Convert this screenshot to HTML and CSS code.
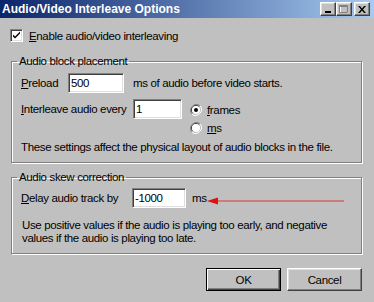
FILE: index.html
```html
<!DOCTYPE html>
<html lang="en">
<head>
    <meta charset="UTF-8">
    <meta name="viewport" content="width=device-width, initial-scale=1.0">
    <title>Audio/Video Interleave Options</title>
    <link rel="stylesheet" href="styles.css">
</head>
<body>
    <div class="titlebar">
        <span class="title">Audio/Video Interleave Options</span>
        <div class="caption-btns">
            <span class="cap-btn">
                <svg width="8" height="8" viewBox="0 0 8 8"><rect x="1" y="6" width="6" height="2" fill="#000"/></svg>
            </span>
            <span class="cap-btn">
                <svg width="10" height="9" viewBox="0 0 10 9"><path d="M1.5 1.5h7v6h-7z" fill="none" stroke="#fff"/><path d="M0.5 0.5h8v7h-8z M0.5 1.5h8" fill="none" stroke="#808080"/></svg>
            </span>
            <span class="cap-btn cap-close">
                <svg width="8" height="7" viewBox="0 0 8 7"><path d="M0 0h2l2 2.5L6 0h2L5 3.5 8 7H6L4 4.5 2 7H0l3-3.5z" fill="#000"/></svg>
            </span>
        </div>
    </div>

    <label class="enable">
        <span class="checkbox">
            <svg width="9" height="9" viewBox="0 0 9 9"><path d="M1 3.5l2 2 5-5v2l-5 5-2-2z" fill="#000"/></svg>
        </span>
        <span><u>E</u>nable audio/video interleaving</span>
    </label>

    <fieldset class="group group-placement">
        <legend>Audio block placement</legend>
        <div class="row">
            <span class="lbl lbl-preload"><u>P</u>reload</span>
            <input type="text" class="field field-preload" value="500">
            <span class="after-preload">ms of audio before video starts.</span>
        </div>
        <div class="row row-every">
            <span class="lbl lbl-every"><u>I</u>nterleave audio every</span>
            <input type="text" class="field field-every" value="1">
            <div class="radios">
                <div class="radio-item">
                    <svg width="12" height="12" viewBox="0 0 12 12">
                        <path d="M10.2 1.8A6 6 0 0 0 1.8 10.2" fill="none" stroke="#808080"/>
                        <path d="M9.2 2.8A4.5 4.5 0 0 0 2.8 9.2" fill="none" stroke="#404040"/>
                        <circle cx="6" cy="6" r="4" fill="#fff"/>
                        <path d="M1.8 10.2A6 6 0 0 0 10.2 1.8" fill="none" stroke="#fff"/>
                        <circle cx="6" cy="6" r="2" fill="#000"/>
                    </svg>
                    <span><u>f</u>rames</span>
                </div>
                <div class="radio-item">
                    <svg width="12" height="12" viewBox="0 0 12 12">
                        <path d="M10.2 1.8A6 6 0 0 0 1.8 10.2" fill="none" stroke="#808080"/>
                        <path d="M9.2 2.8A4.5 4.5 0 0 0 2.8 9.2" fill="none" stroke="#404040"/>
                        <circle cx="6" cy="6" r="4" fill="#fff"/>
                        <path d="M1.8 10.2A6 6 0 0 0 10.2 1.8" fill="none" stroke="#fff"/>
                    </svg>
                    <span><u>m</u>s</span>
                </div>
            </div>
        </div>
        <p class="note">These settings affect the physical layout of audio blocks in the file.</p>
    </fieldset>

    <fieldset class="group group-skew">
        <legend>Audio skew correction</legend>
        <div class="row">
            <span class="lbl lbl-delay"><u>D</u>elay audio track by</span>
            <input type="text" class="field field-delay" value="-1000">
            <span class="after-delay">ms</span>
            <svg class="arrow" width="140" height="20" viewBox="0 0 140 20">
                <path d="M9 12H137" stroke="#d63a3a" stroke-width="1.2"/>
                <path d="M0 12L11 8.5V15.5Z" fill="#e01010"/>
            </svg>
        </div>
        <p class="note note-skew">Use positive values if the audio is playing too early, and negative<br>values if the audio is playing too late.</p>
    </fieldset>

    <div class="buttons">
        <button class="btn btn-default">OK</button>
        <button class="btn">Cancel</button>
    </div>
</body>
</html>
```

FILE: styles.css
```css
*,
*::after,
*::before {
    box-sizing: border-box;
}
body {
    margin: 0;
    width: 374px;
    height: 302px;
    overflow: hidden;
    background: #c0c0c0;
    font-family: "Liberation Sans", Arial, sans-serif;
    font-size: 11.5px;
    letter-spacing: -0.35px;
    color: #000;
}
.titlebar {
    height: 18px;
    display: flex;
    align-items: center;
    justify-content: space-between;
    padding: 0 4px 0 2px;
    background: linear-gradient(to right, #0a246a, #a6caf0);
    letter-spacing: 0;
}
.title {
    color: #fff;
    font-weight: bold;
    font-size: 12px;
}
.caption-btns {
    display: flex;
}
.cap-btn {
    width: 16px;
    height: 14px;
    display: flex;
    align-items: center;
    justify-content: center;
    background: #c0c0c0;
    border: 1px solid;
    border-color: #fff #404040 #404040 #fff;
    box-shadow: inset -1px -1px #808080, inset 1px 1px #dfdfdf;
}
.cap-close {
    margin-left: 2px;
}
.enable {
    display: flex;
    align-items: center;
    gap: 6px;
    height: 13px;
    margin: 11px 0 0 10px;
}
.checkbox {
    width: 13px;
    height: 13px;
    display: flex;
    align-items: center;
    justify-content: center;
    background: #fff;
    border: 1px solid;
    border-color: #808080 #fff #fff #808080;
    box-shadow: inset 1px 1px #404040, inset -1px -1px #dfdfdf;
}
.group {
    width: 351px;
    min-width: 0;
    margin: 13px 0 0 11px;
    padding: 5px 8px 8px 9px;
    border: 1px solid #808080;
    box-shadow: inset 1px 1px #fff, 1px 1px #fff;
}
.group legend {
    margin-left: -4px;
    padding: 0 2px;
    line-height: 13px;
}
.group-skew {
    margin-top: 8px;
    padding-top: 4px;
    padding-bottom: 8px;
}
.row {
    display: flex;
    align-items: center;
    height: 20px;
}
.row-every {
    align-items: flex-start;
    height: auto;
    margin-top: 6px;
}
.lbl {
    line-height: 20px;
    white-space: nowrap;
}
.lbl-preload {
    width: 47px;
}
.lbl-every {
    width: 112px;
}
.lbl-delay {
    width: 111px;
}
.field {
    height: 20px;
    padding: 0 0 0 2px;
    border: 1px solid;
    border-color: #808080 #fff #fff #808080;
    box-shadow: inset 1px 1px #404040, inset -1px -1px #dfdfdf;
    background: #fff;
    font: inherit;
    letter-spacing: inherit;
    color: #000;
    outline: none;
}
.field-preload {
    width: 56px;
}
.field-every {
    width: 49px;
}
.field-delay {
    width: 54px;
}
.after-preload {
    margin-left: 9px;
}
.radios {
    display: flex;
    flex-direction: column;
    gap: 6px;
    margin: 5px 0 0 8px;
}
.radio-item {
    display: flex;
    align-items: center;
    gap: 5px;
    height: 12px;
}
.note {
    margin: 7px 0 0;
    line-height: 13px;
}
.note-skew {
    margin-top: 11px;
    padding-left: 1px;
}
.after-delay {
    margin-left: 6px;
}
.arrow {
    flex-shrink: 0;
    margin-top: 2px;
}
.buttons {
    display: flex;
    justify-content: flex-end;
    gap: 6px;
    margin: 14px 12px 0 0;
}
.btn {
    width: 75px;
    height: 23px;
    padding: 0;
    background: #c0c0c0;
    border: 1px solid;
    border-color: #fff #404040 #404040 #fff;
    box-shadow: inset -1px -1px #808080, inset 1px 1px #dfdfdf;
    font: inherit;
    letter-spacing: inherit;
    color: #000;
}
.btn-default {
    border-color: #000;
    box-shadow: inset 1px 1px #fff, inset -1px -1px #404040, inset -2px -2px #808080;
}
```
